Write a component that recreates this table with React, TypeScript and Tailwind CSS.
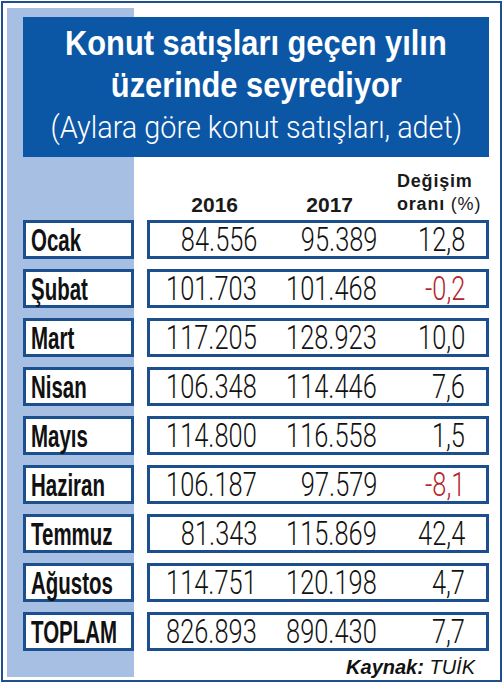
import React from "react";

const rows: [string, string, string, string, boolean][] = [
  ["Ocak", "84.556", "95.389", "12,8", false],
  ["Şubat", "101.703", "101.468", "-0,2", true],
  ["Mart", "117.205", "128.923", "10,0", false],
  ["Nisan", "106.348", "114.446", "7,6", false],
  ["Mayıs", "114.800", "116.558", "1,5", false],
  ["Haziran", "106.187", "97.579", "-8,1", true],
  ["Temmuz", "81.343", "115.869", "42,4", false],
  ["Ağustos", "114.751", "120.198", "4,7", false],
  ["TOPLAM", "826.893", "890.430", "7,7", false],
];

const sans = "font-['Liberation_Sans',Arial,sans-serif]";
const light = "font-['Roboto','Liberation_Sans',sans-serif]";

function Num({ v, red }: { v: string; red?: boolean }) {
  return (
    <span
      className={`inline-block shrink-0 origin-right scale-x-[0.77] whitespace-nowrap text-[33px] leading-none font-light ${light} ${
        red ? "text-[#b3262b]" : "text-[#111]"
      }`}
    >
      {v}
    </span>
  );
}

export default function App() {
  return (
    <div className="w-[504px] h-[683px] bg-white pl-[1px] pt-[1px] pr-[2px] pb-[1px]">
      <div className="h-full border-2 border-[#1f4f8f] pl-[4px] pr-[4px] pt-[5px] pb-[3px]">
        <div className="h-full bg-[linear-gradient(to_right,#a7bfe3_127px,#ffffff_127px)] flex flex-col">
          {/* Title */}
          <div className="mt-[9px] ml-[16px] w-[466px] h-[140px] bg-[#0c56a6] text-white pt-[5px] flex flex-col items-center">
            <div className={`h-[42px] leading-[42px] text-[35px] font-bold ${sans}`}>
              <span className="inline-block scale-x-[0.88] whitespace-nowrap">Konut satışları geçen yılın</span>
            </div>
            <div className={`h-[42px] leading-[42px] text-[35px] font-bold ${sans}`}>
              <span className="inline-block scale-x-[0.88] whitespace-nowrap">üzerinde seyrediyor</span>
            </div>
            <div className={`h-[44px] leading-[44px] text-[31px] font-light ${light}`}>
              <span className="inline-block scale-x-[0.93] whitespace-nowrap">(Aylara göre konut satışları, adet)</span>
            </div>
          </div>

          {/* Header */}
          <div className={`h-[63px] flex items-end pb-[5px] ml-[143px] text-[#1a1a1a] ${sans}`}>
            <div className="w-[107px] text-right pr-[19px] text-[21px] leading-[21px] font-bold">2016</div>
            <div className="w-[120px] text-right pr-[24px] text-[21px] leading-[21px] font-bold">2017</div>
            <div className="ml-[20px] flex flex-col">
              <div className="text-[18px] leading-[25px] font-bold tracking-[0.8px]">Değişim</div>
              <div className="text-[18px] leading-[21px] whitespace-nowrap tracking-[0.8px]">
                <span className="font-bold">oranı</span>
                <span className="font-light"> (%)</span>
              </div>
            </div>
          </div>

          {/* Rows */}
          <div className="flex flex-col gap-[10px]">
            {rows.map(([label, a, b, c, red]) => (
              <div key={label} className="flex h-[39px]">
                <div className="ml-[16px] w-[111px] h-full border-[3px] border-[#1c4f8e] bg-white flex items-center pl-[5px]">
                  <span
                    className={`inline-block shrink-0 origin-left scale-x-[0.64] whitespace-nowrap text-[32px] leading-none font-bold text-[#111] ${sans}`}
                  >
                    {label}
                  </span>
                </div>
                <div className="ml-[13px] w-[342px] h-full border-[3px] border-[#1c4f8e] bg-white flex items-center">
                  <div className="w-[107px] flex justify-end">
                    <Num v={a} />
                  </div>
                  <div className="w-[120px] flex justify-end">
                    <Num v={b} />
                  </div>
                  <div className="w-[88px] flex justify-end">
                    <Num v={c} red={red} />
                  </div>
                </div>
              </div>
            ))}
          </div>

          {/* Source */}
          <div className={`mt-[6px] pr-[21px] text-right text-[20px] leading-[20px] italic text-[#111] ${sans}`}>
            <span className="font-bold">Kaynak:</span> TUİK
          </div>
        </div>
      </div>
    </div>
  );
}
